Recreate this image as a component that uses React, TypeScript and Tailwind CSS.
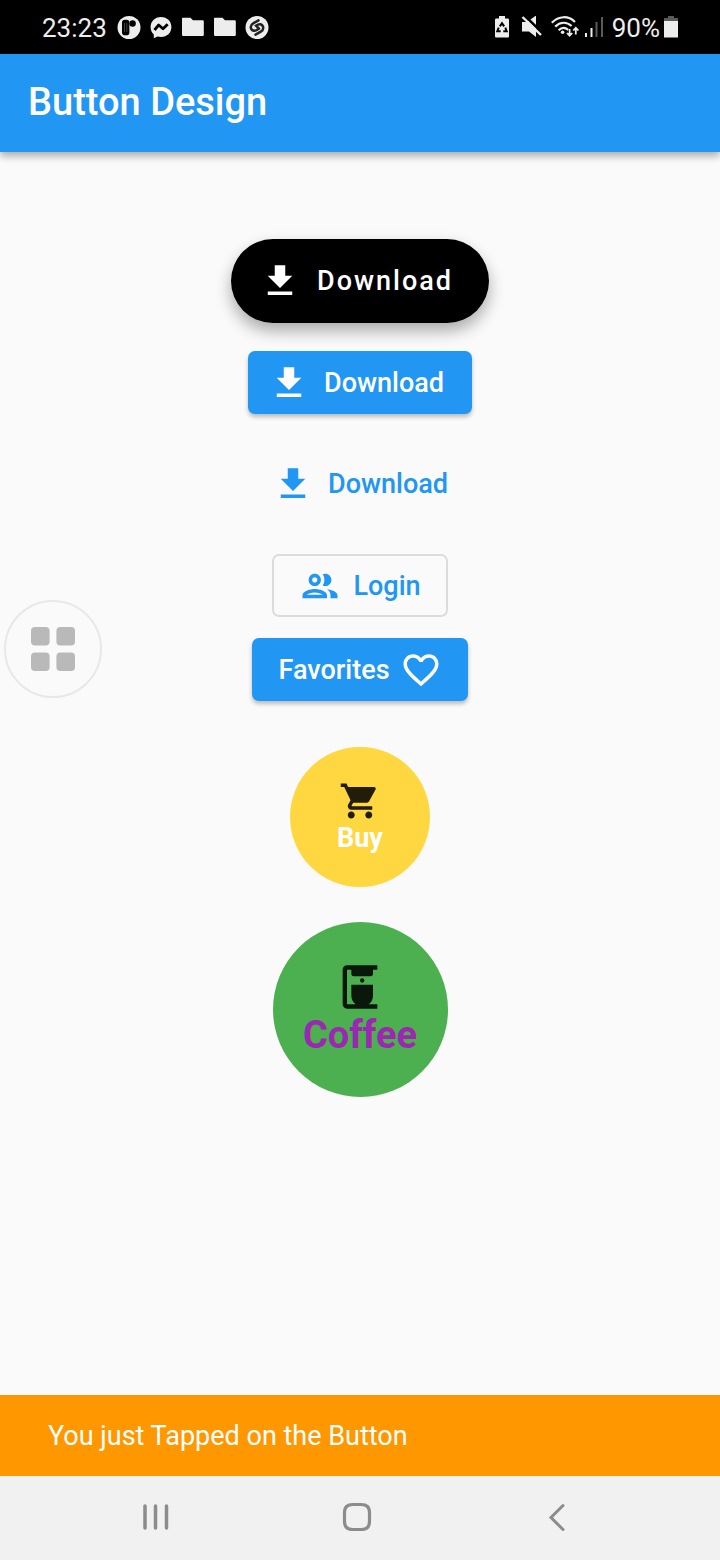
import type { ReactNode } from "react";

function MaterialIcon({ className = "size-[42px]", children }: { className?: string; children: ReactNode }) {
  return (
    <svg viewBox="0 0 24 24" fill="currentColor" aria-hidden="true" className={`shrink-0 ${className}`}>
      {children}
    </svg>
  );
}

function DownloadIcon() {
  return (
    <MaterialIcon>
      <path d="M19 9h-4V3H9v6H5l7 7 7-7zM5 18v2h14v-2H5z" />
    </MaterialIcon>
  );
}

function FolderIcon() {
  return (
    <svg viewBox="0 0 24 24" aria-hidden="true" className="size-6">
      <path d="M2 1.8h7.500l2.500 2.500h9.500c.8 0 1.300.5 1.300 1.300v13.200c0 .8-.5 1.300-1.300 1.300h-19c-.8 0-1.500-.5-1.500-1.300V2.800c0-.6.4-1 1-1z" fill="#ededed" />
    </svg>
  );
}

function StatusBar() {
  return (
    <div className="flex h-[54px] items-center justify-between bg-black px-[42px] pt-0.5 text-[26px] text-[#ededed]">
      <div className="flex items-center gap-2">
        <span className="leading-8">23:23</span>
        <svg viewBox="0 0 24 24" aria-hidden="true" className="ml-0.5 size-6">
          <circle cx="12" cy="11.500" r="11.500" fill="#ededed" />
          <rect x="5" y="3.800" width="7.400" height="15.400" rx="2.800" fill="#000" />
          <path d="M7.500 7v9M9.800 7v9" stroke="#3c3c3c" strokeWidth="1" />
          <circle cx="15.600" cy="7.500" r="3.200" fill="#000" />
        </svg>
        <svg viewBox="0 0 24 24" aria-hidden="true" className="size-6">
          <path d="M12 1C5.900 1 1.600 5.400 1.600 11.100c0 3 1.200 5.600 3.200 7.400v3.700l3.700-1.700c1.100.3 2.300.5 3.500.5 6.100 0 10.400-4.300 10.400-10S18.100 1 12 1z" fill="#ededed" />
          <path d="M5.500 14l4.200-5 4.300 3.800 4.700-4.600" fill="none" stroke="#000" strokeWidth="2.800" strokeLinejoin="round" />
        </svg>
        <FolderIcon />
        <FolderIcon />
        <svg viewBox="0 0 24 24" aria-hidden="true" className="size-6">
          <circle cx="12" cy="11.500" r="11.500" fill="#ededed" />
          <g fill="none" stroke="#222" strokeWidth="2.500" strokeLinecap="round">
            <path d="M13.500 4.300L8.200 7.300C4.500 9.500 5.300 14 8.800 14.700c1.500.3 2.800-.4 4.200-1.400" />
            <path d="M10.500 18.700l5.300-3C19.500 13.500 18.700 9 15.200 8.300c-1.500-.3-2.800.4-4.200 1.400l3 3" />
          </g>
        </svg>
      </div>
      <div className="flex items-center">
        <svg viewBox="0 0 16 24" aria-hidden="true" className="h-6 w-4">
          <path d="M5 0h6v2.500h2.500c1 0 1.500.5 1.500 1.500v16c0 1-.5 1.500-1.500 1.500h-11C1.500 21.500 1 21 1 20V4c0-1 .5-1.500 1.500-1.500H5z" fill="#ededed" />
          <g fill="none" stroke="#000" strokeWidth="2">
            <path d="M5.800 10.300L8 7.300l2.200 3" />
            <path d="M11.300 11.600l1.400 3.600H9.300" />
            <path d="M4.700 11.600l-1.400 3.600h3.400" />
          </g>
        </svg>
        <svg viewBox="0 0 22 24" aria-hidden="true" className="ml-[11px] h-6 w-[22px]">
          <path d="M1 6h5l9-6.500V21L8 15.500H1z" fill="#ededed" />
          <path d="M2.500-1.500l20 19.500" stroke="#000" strokeWidth="2.600" />
          <path d="M1.500 1l18.500 18" stroke="#ededed" strokeWidth="2.400" />
        </svg>
        <svg viewBox="0 0 30 24" aria-hidden="true" className="ml-2 h-6 w-[30px]">
          <g fill="none" stroke="#ededed" strokeWidth="2.200">
            <path d="M.8 6.800c7-7.300 16.500-7.300 23.200-.8" />
            <path d="M4.200 10.600c5-5 11.500-5 16.400-.6" />
            <path d="M7.600 14.200c3-2.800 6.600-2.800 9.600-.4" />
          </g>
          <g fill="none" stroke="#ededed" strokeWidth="1.800">
            <path d="M18.600 13v6.500M16 17l2.600 2.700 2.600-2.700M24.800 18.500V12M22.200 14.500l2.600-2.700 2.600 2.700" />
          </g>
          <circle cx="11.600" cy="16.200" r="1.800" fill="#ededed" />
        </svg>
        <svg viewBox="0 0 20 24" aria-hidden="true" className="ml-[3px] h-6 w-5">
          <path d="M1 17h2v4H1zM6.500 12h2v9h-2z" fill="#ededed" />
          <path d="M11.500 6h2v15h-2zM17 1h2v20h-2z" fill="#5a5a5a" />
        </svg>
        <span className="ml-2 leading-8">90%</span>
        <svg viewBox="0 0 14 24" aria-hidden="true" className="ml-1 h-6 w-[14px]">
          <path d="M4 0h6v2h4v3H0V2h4z" fill="#5a5a5a" />
          <path d="M0 5h14v16.500H0z" fill="#ededed" />
        </svg>
      </div>
    </div>
  );
}

export default function App() {
  return (
    <div className="relative flex min-h-screen flex-col bg-[#fafafa] font-['Roboto',sans-serif]">
      <StatusBar />
      <header className="flex h-[98px] items-center bg-[#2196f3] px-7 pb-0.5 shadow-[0_4px_8px_rgba(0,0,0,0.32)]">
        <h1 className="text-[38px] leading-[46px] font-medium text-white">Button Design</h1>
      </header>

      <main className="flex flex-1 flex-col items-center pt-[87px] pb-12 text-[27px] leading-8 font-medium">
        <button className="flex h-[84px] items-center gap-4 rounded-full bg-black pr-9 pl-7 tracking-[2px] text-white shadow-[0_8px_16px_rgba(0,0,0,0.32)]">
          <DownloadIcon />
          Download
        </button>
        <button className="mt-7 flex h-[63px] items-center gap-[14px] rounded-[7px] bg-[#2196f3] pr-7 pl-5 text-white shadow-[0_3px_4px_rgba(0,0,0,0.25)]">
          <DownloadIcon />
          Download
        </button>
        <button className="mt-[38px] flex h-[63px] items-center gap-[14px] px-[14px] text-[#2196f3]">
          <DownloadIcon />
          Download
        </button>
        <button className="mt-[39px] flex h-[63px] items-center gap-3 rounded-[7px] border-2 border-[#dcdcdc] px-[25px] text-[#2196f3]">
          <MaterialIcon>
            <path d="M9 13.750c-2.340 0-7 1.170-7 3.500V19h14v-1.750c0-2.330-4.660-3.500-7-3.500zM4.340 17c.840-.580 2.870-1.250 4.660-1.250s3.820.670 4.660 1.250H4.340zM9 12c1.930 0 3.500-1.570 3.500-3.500S10.930 5 9 5 5.500 6.570 5.500 8.500 7.070 12 9 12zm0-5c.830 0 1.500.670 1.500 1.500S9.830 10 9 10s-1.500-.670-1.500-1.500S8.170 7 9 7zm7.040 6.810c1.160.840 1.960 1.960 1.960 3.440V19h4v-1.750c0-2.020-3.500-3.170-5.960-3.440zM15 12c1.930 0 3.500-1.570 3.500-3.500S16.930 5 15 5c-.540 0-1.040.130-1.500.350.630.890 1 1.980 1 3.150s-.370 2.260-1 3.150c.460.220.960.350 1.500.350z" />
          </MaterialIcon>
          Login
        </button>
        <button className="mt-[21px] flex h-[63px] items-center gap-[10px] rounded-[7px] bg-[#2196f3] px-[26px] text-white shadow-[0_3px_4px_rgba(0,0,0,0.25)]">
          Favorites
          <MaterialIcon>
            <path d="M16.500 3c-1.740 0-3.410.810-4.500 2.090C10.910 3.810 9.240 3 7.500 3 4.420 3 2 5.420 2 8.500c0 3.780 3.400 6.860 8.550 11.540L12 21.350l1.450-1.320C18.600 15.360 22 12.280 22 8.500 22 5.420 19.580 3 16.500 3zm-4.400 15.550l-.1.100-.1-.1C7.140 14.240 4 11.390 4 8.500 4 6.500 5.500 5 7.500 5c1.540 0 3.040.990 3.570 2.360h1.870C13.460 5.990 14.960 5 16.500 5c2 0 3.500 1.500 3.500 3.500 0 2.890-3.140 5.740-7.900 10.050z" />
          </MaterialIcon>
        </button>
        <button className="mt-[46px] flex size-[140px] flex-col items-center justify-center rounded-full bg-[#ffd740] font-bold text-white">
          <MaterialIcon className="size-[42px] text-[#221d09]">
            <path d="M7 18c-1.100 0-1.990.900-1.990 2S5.900 22 7 22s2-.900 2-2-.900-2-2-2zM1 2v2h2l3.600 7.590-1.350 2.450c-.160.280-.250.610-.250.960 0 1.100.900 2 2 2h12v-2H7.420c-.140 0-.250-.110-.250-.250l.030-.120.900-1.630h7.450c.750 0 1.410-.410 1.750-1.030l3.580-6.490c.080-.140.120-.310.120-.480 0-.550-.450-1-1-1H5.210l-.940-2H1zm16 16c-1.100 0-1.990.900-1.990 2s.890 2 1.990 2 2-.900 2-2-.900-2-2-2z" />
          </MaterialIcon>
          Buy
        </button>
        <button className="mt-[35px] flex size-[175px] flex-col items-center justify-center rounded-full bg-[#4caf50] pb-0.5 text-[38px] leading-[44px] font-bold text-[#9c27b0]">
          <MaterialIcon className="size-[52px] text-[#0a170b]">
            <path d="M18 6V4h2V2H6c-1.100 0-2 .9-2 2v16c0 1.100.9 2 2 2h14v-2h-4.030A4.980 4.980 0 0 0 18 16v-5H8v5c0 1.640.810 3.090 2.030 4H6V4h2v2c0 .55.45 1 1 1h8c.55 0 1-.45 1-1z" />
            <circle cx="13" cy="9" r="1" />
          </MaterialIcon>
          Coffee
        </button>
      </main>

      <div role="status" className="flex h-[81px] items-center bg-[#ff9800] px-12 text-[27px] leading-8 text-white">
        You just Tapped on the Button
      </div>

      <nav className="flex h-[84px] items-center justify-around bg-[#f1f1f1] pr-[61px] pb-0.5 pl-[55px] text-[#8c8c8c]">
        <button aria-label="Recent apps" className="p-2">
          <svg viewBox="0 0 32 32" className="size-8" fill="none" stroke="currentColor" strokeWidth="3.500" strokeLinecap="round">
            <path d="M5 5v22M15.500 5v22M26.500 5v22" />
          </svg>
        </button>
        <button aria-label="Home" className="p-2">
          <svg viewBox="0 0 32 32" className="size-8" fill="none" stroke="currentColor" strokeWidth="3.200">
            <path d="M12 3.500h8c6 0 8.500 2.500 8.500 8.500v8c0 6-2.500 8.500-8.500 8.500h-8c-6 0-8.500-2.500-8.500-8.500v-8c0-6 2.500-8.500 8.500-8.500z" />
          </svg>
        </button>
        <button aria-label="Back" className="p-2">
          <svg viewBox="0 0 32 32" className="size-8" fill="none" stroke="currentColor" strokeWidth="3" strokeLinecap="round">
            <path d="M21 4.500L9 16.500l12 12" />
          </svg>
        </button>
      </nav>

      <button aria-label="Open shortcuts" className="absolute top-[600px] left-1 grid size-[98px] place-items-center rounded-full border-2 border-[#e8e8e8] bg-[#fafafa]">
        <svg viewBox="0 0 44 44" className="size-11" fill="#b9b9b9">
          <rect width="18.600" height="18.600" rx="4" />
          <rect x="25.400" width="18.600" height="18.600" rx="4" />
          <rect y="25.400" width="18.600" height="18.600" rx="4" />
          <rect x="25.400" y="25.400" width="18.600" height="18.600" rx="4" />
        </svg>
      </button>
    </div>
  );
}
